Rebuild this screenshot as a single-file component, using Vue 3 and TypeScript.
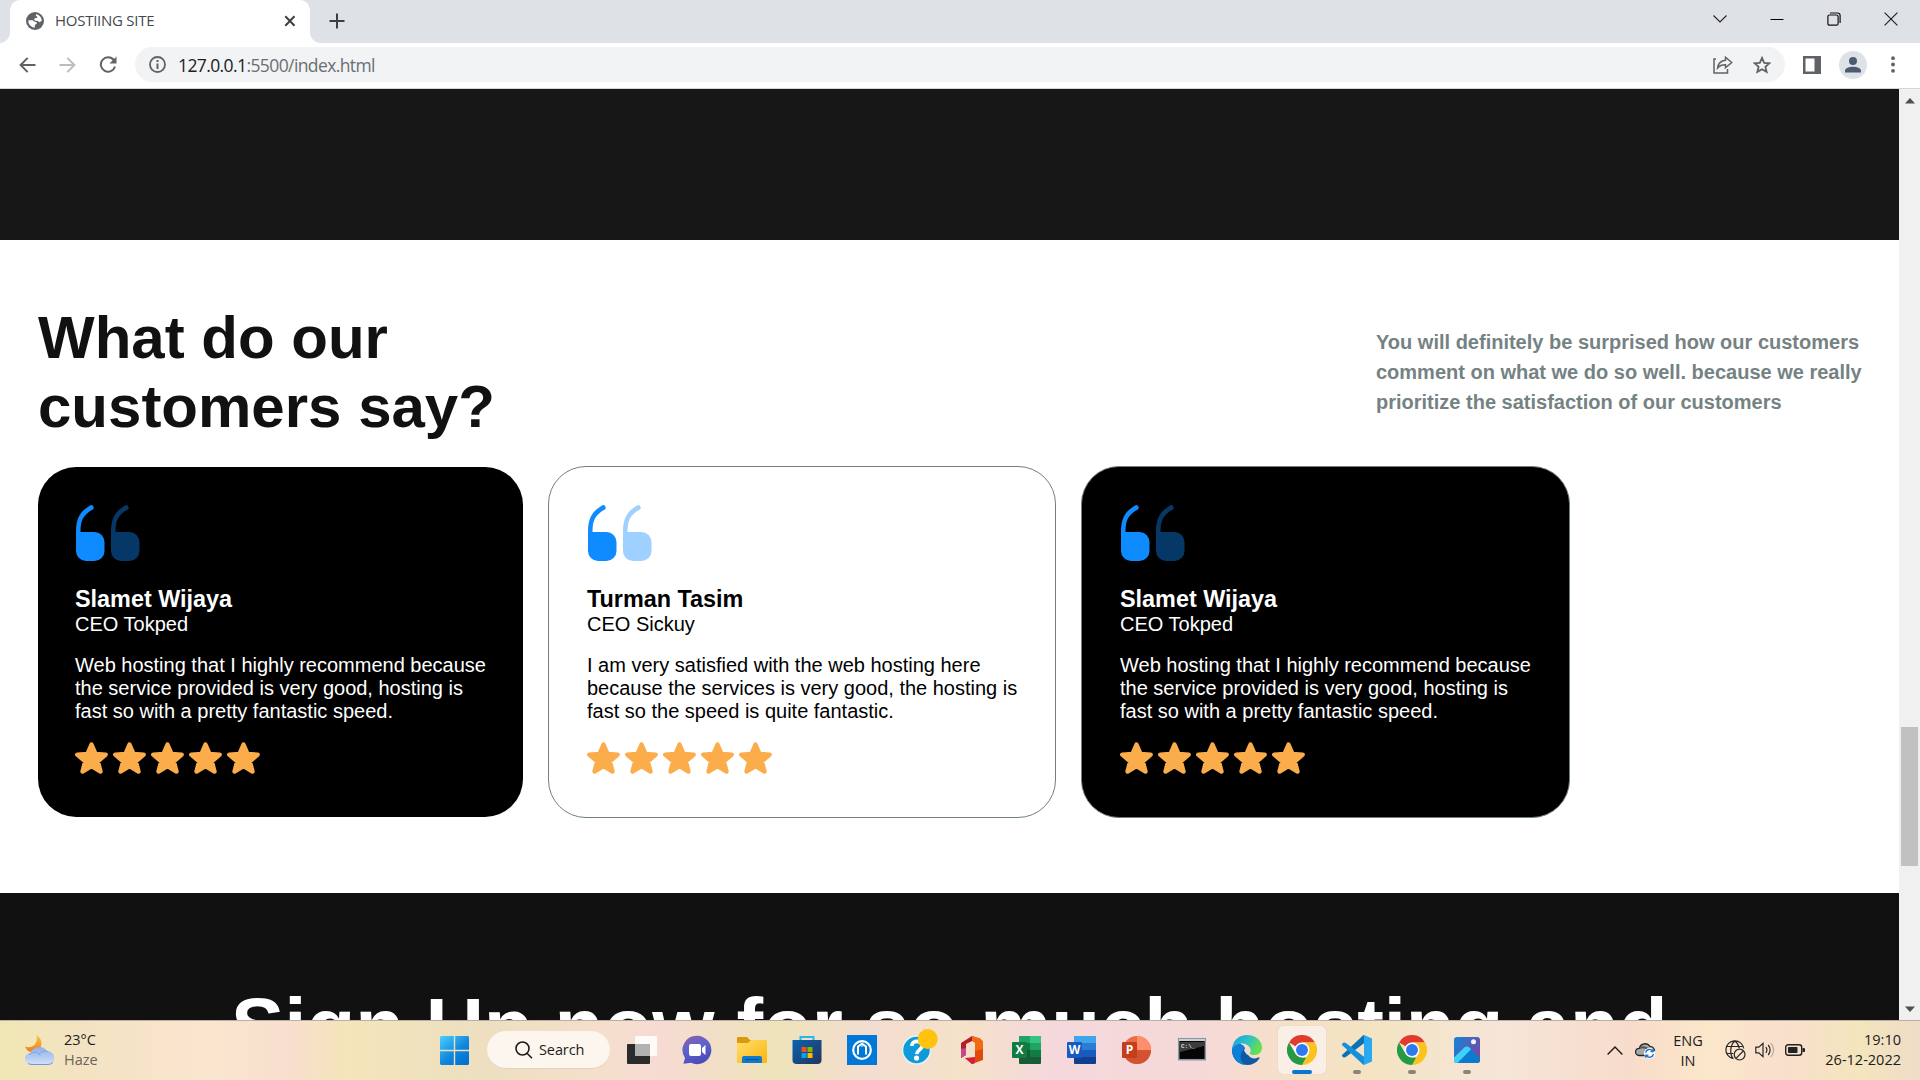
<script setup lang="ts">
interface Review {
  name: string
  role: string
  lines: string[]
  kind: string
}

const slamet = {
  name: 'Slamet Wijaya',
  role: 'CEO Tokped',
  lines: ['Web hosting that I highly recommend because', 'the service provided is very good, hosting is', 'fast so with a pretty fantastic speed.'],
}

const reviews: Review[] = [
  { ...slamet, kind: 'dark first' },
  {
    name: 'Turman Tasim',
    role: 'CEO Sickuy',
    lines: ['I am very satisfied with the web hosting here', 'because the services is very good, the hosting is', 'fast so the speed is quite fantastic.'],
    kind: 'light outlined',
  },
  { ...slamet, kind: 'dark outlined last' },
]

const apps = ['taskview', 'chat', 'folder', 'store', 'vpn', 'help', 'office', 'excel', 'word', 'ppt', 'cmd', 'edge', 'chrome', 'code', 'chrome', 'photos']
const running: Record<number, string> = { 12: 'active', 13: 'open', 14: 'open', 15: 'open' }
const quotePath = 'M0 46V27C0 12 5 6 14 .4a2.500 2.500 0 0 1 2.800 4.100C8.500 9.500 4.600 13 4.500 27H18.500a10 10 0 0 1 10 10v9a10 10 0 0 1-10 10H10A10 10 0 0 1 0 46z'
</script>

<template>
  <div class="screen">
    <div class="tabstrip">
      <div class="tab">
        <svg class="favicon" width="18" height="18" viewBox="0 0 18 18">
          <circle cx="9" cy="9" r="9" fill="#5f6368" />
          <path d="M10.200 2.300c3.200.6 5.500 3.300 5.600 6.500l-2.300 1.500-1.700-1.300-2.800-.2-1-1.800 1.400-.9h1.800V4.600L9.700 4z" fill="#fff" />
          <path d="M2.300 8.200h4.500l1.800 1.600 1.900.3.200 1.700-1.900 1.200v2.700A6.800 6.800 0 0 1 2.300 8.200z" fill="#fff" />
        </svg>
        <span class="tab-title">HOSTIING SITE</span>
        <svg class="tab-close" width="12" height="12" viewBox="0 0 12 12"><path d="M1.300 1.300 10.500 10.700M10.500 1.300 1.300 10.700" stroke="#3c4043" stroke-width="2" /></svg>
      </div>
      <svg class="newtab" width="16" height="16" viewBox="0 0 16 16"><path d="M8 .5v15M.5 8h15" stroke="#3c4043" stroke-width="2" /></svg>
      <div class="winctl">
        <svg width="14" height="14" viewBox="0 0 14 14"><path d="M.5 3.500 7 10l6.500-6.500" fill="none" stroke="#222" stroke-width="1.100" /></svg>
        <svg width="14" height="14" viewBox="0 0 14 14"><path d="M.5 7.500h13" stroke="#000" stroke-width="1" /></svg>
        <svg width="14" height="14" viewBox="0 0 14 14" fill="none" stroke="#111" stroke-width="1.200"><rect x=".9" y="3" width="10.200" height="10.200" rx="1.500" /><path d="M3 1h7.500A2.600 2.600 0 0 1 13.100 3.600V11" /></svg>
        <svg width="14" height="14" viewBox="0 0 14 14"><path d="M.6.6 13.400 13.400M13.400.6.6 13.400" stroke="#222" stroke-width="1.200" /></svg>
      </div>
    </div>

    <div class="toolbar">
      <svg width="17" height="16" viewBox="0 0 17 16" fill="none" stroke="#5f6368" stroke-width="2"><path d="M16.500 8H2M8.700.9 1.600 8l7.100 7.100" /></svg>
      <svg class="fwd" width="17" height="16" viewBox="0 0 17 16" fill="none" stroke="#bbbdc0" stroke-width="2"><path d="M.5 8H15M8.300.9 15.400 8l-7.100 7.100" /></svg>
      <svg class="reload" width="18" height="17" viewBox="0 0 18 17"><path d="M14.800 4.200A7.200 7.200 0 1 0 16 10.500" fill="none" stroke="#5f6368" stroke-width="2" /><path d="M17.500.5v7h-7z" fill="#5f6368" /></svg>
      <div class="omnibox">
        <svg width="17" height="17" viewBox="0 0 17 17"><circle cx="8.500" cy="8.500" r="7.500" fill="none" stroke="#5f6368" stroke-width="1.800" /><path d="M7.500 7.400h2V13h-2zM7.500 4h2v2h-2z" fill="#5f6368" /></svg>
        <span class="url"><b>127.0.0.1</b>:5500/index.html</span>
        <svg class="share" width="20" height="18" viewBox="0 0 20 18" fill="none" stroke="#5f6368" stroke-width="1.500"><path d="M3 3H1v14h13.500v-4" /><path d="M12.500 1.300 18.700 6.500l-6.200 5.200V8.800C9.500 8.700 6.800 9.500 4.600 12 5.100 7.800 7.800 4.700 12.500 4.200z" /></svg>
        <svg class="fav" width="18" height="18" viewBox="0 0 18 18"><path d="m9 1.900 2.200 4.900 5.100.5-3.900 3.500 1.200 5.100L9 13.200l-4.600 2.700 1.200-5.100L1.700 7.300l5.100-.5z" fill="none" stroke="#5f6368" stroke-width="1.800" /></svg>
      </div>
      <svg class="panel" width="18" height="18" viewBox="0 0 18 18"><path d="M0 0h18v18H0zM2.500 2.500v13h9v-13z" fill="#5f6368" fill-rule="evenodd" /></svg>
      <svg class="profile" width="28" height="28" viewBox="0 0 28 28"><circle cx="14" cy="14" r="14" fill="#dee1e6" /><circle cx="14" cy="10" r="4" fill="#4d5b70" /><path d="M6 21.500v-1.700C6 17 10.500 15.700 14 15.700s8 1.300 8 4.100v1.700z" fill="#4d5b70" /></svg>
      <svg class="dots" width="4" height="17" viewBox="0 0 4 17" fill="#5f6368"><circle cx="2" cy="2.200" r="1.900" /><circle cx="2" cy="8.500" r="1.900" /><circle cx="2" cy="14.800" r="1.900" /></svg>
    </div>

    <div class="view">
      <main class="page">
        <section class="band"></section>
        <section class="customers">
          <header class="intro">
            <h2>What do our<br />customers say?</h2>
            <p>You will definitely be surprised how our customers<br />comment on what we do so well. because we really<br />prioritize the satisfaction of our customers</p>
          </header>
          <div class="cards">
            <article v-for="(r, i) in reviews" :key="i" class="card" :class="r.kind">
              <svg class="quote" width="64" height="56" viewBox="0 0 64 56" fill="#0d8bff">
                <path :d="quotePath" />
                <path opacity=".4" transform="translate(35 0)" :d="quotePath" />
              </svg>
              <h3>{{ r.name }}</h3>
              <div class="role">{{ r.role }}</div>
              <p><template v-for="(l, n) in r.lines" :key="n">{{ l }}<br /></template></p>
              <div class="stars">
                <svg v-for="s in 5" :key="s" width="33" height="32" viewBox="0 0 33 32"><path d="M16.500 2.500 20.500 11.900 30.700 12.600 22.900 19.400 25.500 29.500 16.500 24.200 7.500 29.500 10.100 19.400 2.300 12.600 12.500 11.900z" fill="#fbad4c" stroke="#fbad4c" stroke-width="4.400" stroke-linejoin="round" /></svg>
              </div>
            </article>
          </div>
        </section>
        <section class="signup"><h2>Sign Up now for so much hosting and</h2></section>
      </main>
      <div class="scrollbar">
        <svg width="10" height="6" viewBox="0 0 10 6"><path d="M0 5.500 5 0l5 5.500z" fill="#505050" /></svg>
        <div class="thumb"></div>
        <svg width="10" height="6" viewBox="0 0 10 6"><path d="M0 .5 5 6l5-5.500z" fill="#505050" /></svg>
      </div>
    </div>

    <footer class="taskbar">
      <div class="weather">
        <svg width="30" height="30" viewBox="0 0 30 30">
          <defs>
            <linearGradient id="moon" x1="0" y1="0" x2="0" y2="1"><stop offset="0" stop-color="#f9c74c" /><stop offset="1" stop-color="#ef7d14" /></linearGradient>
            <linearGradient id="cloud" x1="0" y1="0" x2="0" y2="1"><stop offset="0" stop-color="#8fb0ea" /><stop offset="1" stop-color="#cfe0fa" /></linearGradient>
          </defs>
          <path d="M11.500 0C18 4 18.500 13 11 16.500 6 18.500 1.500 16 0 11.500c4.500 2 9.500 0 11-4C12 5 12 2.500 11.500 0z" fill="url(#moon)" />
          <path d="M6 29.500a5.700 5.700 0 0 1-.6-11.400A9.400 9.400 0 0 1 22 16.300a6.600 6.600 0 0 1 1.500 13.200z" fill="url(#cloud)" />
          <path d="M4 20c4-4.500 9-3 11 .5M14 19c3-3 7-3.500 9-2.500" fill="none" stroke="#7a9bdb" stroke-width=".8" />
          <path d="M3 28.500q2 1 4 1h16q3 0 5-2" fill="none" stroke="#7295df" />
        </svg>
        <div>23°C<br /><span>Haze</span></div>
      </div>
      <svg class="start" width="29" height="29" viewBox="0 0 29 29">
        <defs><linearGradient id="win" gradientUnits="userSpaceOnUse" x1="0" y1="0" x2="24" y2="29"><stop offset="0" stop-color="#4cd0fd" /><stop offset=".6" stop-color="#0f86dc" /><stop offset="1" stop-color="#0072d0" /></linearGradient></defs>
        <path d="M1 0h12.800v13.800H0V1zM15.200 0H28l1 1v12.800H15.200zM0 15.200h13.800V29H1l-1-1zM15.200 15.200H29V28l-1 1H15.200z" fill="url(#win)" />
      </svg>
      <div class="search">
        <svg width="18" height="18" viewBox="0 0 18 18" fill="none" stroke="#1c1c1c" stroke-width="1.600"><circle cx="7.500" cy="7.500" r="6.500" /><path d="m12 12.300 5 5" /></svg>
        <span>Search</span>
      </div>
      <div class="apps">
        <div v-for="(a, i) in apps" :key="i" class="app" :class="running[i]">
          <svg v-if="a === 'taskview'" width="30" height="30" viewBox="0 0 30 30">
            <rect y="9" width="23" height="20" rx="1" fill="#2b2b2b" /><rect x="8" y="1" width="22" height="20" rx="1" fill="#fff" opacity=".85" /><path d="M8 9h15v12H8z" fill="#a3a3a3" opacity=".75" />
          </svg>
          <svg v-else-if="a === 'chat'" width="30" height="30" viewBox="0 0 30 30">
            <defs><linearGradient id="ch" x1="0" y1="0" x2=".4" y2="1"><stop offset="0" stop-color="#8a62a8" /><stop offset=".5" stop-color="#5f62cc" /><stop offset="1" stop-color="#4d4cb8" /></linearGradient></defs>
            <path d="M15 .8a14.200 14.200 0 1 1-6 27l-7.600 1L3 23A14.200 14.200 0 0 1 15 .8z" fill="url(#ch)" /><rect x="7" y="9" width="12" height="12" rx="2" fill="#fff" /><path d="m20 13 3.500-3v10L20 17z" fill="#fff" />
          </svg>
          <svg v-else-if="a === 'folder'" width="30" height="30" viewBox="0 0 30 30">
            <defs><linearGradient id="fo" x1="0" y1="0" x2="1" y2="1"><stop offset="0" stop-color="#ffdf6d" /><stop offset="1" stop-color="#fbb40c" /></linearGradient></defs>
            <path d="M0 3a1 1 0 0 1 1-1h9l3 3h16v6H0z" fill="#d99a0b" /><path d="M0 8h11l3-3h15a1 1 0 0 1 1 1v21a1 1 0 0 1-1 1H1a1 1 0 0 1-1-1z" fill="url(#fo)" /><path d="M5 28v-5a2 2 0 0 1 2-2h16a2 2 0 0 1 2 2v5z" fill="#0f7acb" /><path d="M8 24.500h14" stroke="#064f8c" />
          </svg>
          <svg v-else-if="a === 'store'" width="30" height="30" viewBox="0 0 30 30">
            <defs><linearGradient id="st" x1="0" y1="0" x2="1" y2="1"><stop offset="0" stop-color="#0b63b0" /><stop offset="1" stop-color="#24335c" /></linearGradient></defs>
            <path d="M8.500 6V2h13v4" fill="none" stroke="#29b5f0" stroke-width="2" /><path d="M.5 5h29v20a4 4 0 0 1-4 4h-21a4 4 0 0 1-4-4z" fill="url(#st)" /><path d="M9.500 12h5v5h-5z" fill="#f25022" /><path d="M15.500 12h5v5h-5z" fill="#7fba00" /><path d="M9.500 18h5v5h-5z" fill="#00a4ef" /><path d="M15.500 18h5v5h-5z" fill="#ffb900" />
          </svg>
          <svg v-else-if="a === 'vpn'" width="30" height="30" viewBox="0 0 30 30">
            <path d="M0 0h30v30H0z" fill="#0078d7" /><circle cx="15" cy="15" r="8.800" fill="none" stroke="#fff" stroke-width="2.200" /><path d="M11 19.500v-8L15 8.700l4 2.800v8" fill="none" stroke="#fff" stroke-width="2" /><path d="M15 9v3" stroke="#fff" stroke-width="1" />
          </svg>
          <svg v-else-if="a === 'help'" class="helpicon" width="36" height="36" viewBox="0 0 36 36">
            <circle cx="14.500" cy="21" r="14" fill="#0f9ad9" stroke="#e8f3f8" stroke-width="1.500" /><path d="M9.800 17c0-6.500 10.500-6 10.200.2-.2 3.800-5 3.700-5.300 8" fill="none" stroke="#fff" stroke-width="3.600" /><circle cx="14.500" cy="29" r="2.600" fill="#fff" /><circle cx="25.700" cy="10" r="10" fill="#ffc20e" />
          </svg>
          <svg v-else-if="a === 'office'" width="30" height="30" viewBox="0 0 30 30">
            <path d="M4 8 15 1v5l-6 3v11l-5 3z" fill="#b41d2d" /><path d="M4 14v9l5-3v-7z" fill="#c44b8b" /><path d="m15 1 8 2.500 3 3V25l-11 4-7-6h10V7.500l-3-1.500z" fill="#e04a0a" /><path d="m15 1 8 2.500 3 3V14l-8 2V7.500L15 6z" fill="#f26a14" /><path d="m8 23 10-1v6l-3 1.200z" fill="#d11f3c" />
          </svg>
          <svg v-else-if="a === 'excel'" width="30" height="30" viewBox="0 0 30 30">
            <rect x="7" y="1" width="22" height="28" rx="1" fill="#185c37" /><path d="M7 2a1 1 0 0 1 1-1h10v7H7z" fill="#21a366" /><path d="M18 1h10a1 1 0 0 1 1 1v6H18z" fill="#33c481" /><path d="M7 8h11v7H7z" fill="#107c41" /><path d="M18 8h11v7H18z" fill="#21a366" /><path d="M18 15h11v7H18z" fill="#107c41" />
            <rect y="7" width="15" height="16" rx="1" fill="#107c41" /><text x="7.500" y="19.300" class="letter">X</text>
          </svg>
          <svg v-else-if="a === 'word'" width="30" height="30" viewBox="0 0 30 30">
            <rect x="7" y="1" width="22" height="28" rx="1" fill="#103f91" /><path d="M7 2a1 1 0 0 1 1-1h20a1 1 0 0 1 1 1v6H7z" fill="#41a5ee" /><path d="M7 8h22v7H7z" fill="#2b7cd3" /><path d="M7 15h22v7H7z" fill="#185abd" />
            <rect y="7" width="15" height="16" rx="1" fill="#185abd" /><text x="7.500" y="19.300" class="letter">W</text>
          </svg>
          <svg v-else-if="a === 'ppt'" width="30" height="30" viewBox="0 0 30 30">
            <circle cx="15" cy="15" r="14" fill="#ed6c47" /><path d="M15 1a14 14 0 0 1 14 14H15z" fill="#ff8f6b" /><path d="M1 15h28a14 14 0 0 1-28 0z" fill="#d35230" />
            <rect y="7" width="15" height="16" rx="1" fill="#c43e1c" /><text x="7.500" y="19.300" class="letter">P</text>
          </svg>
          <svg v-else-if="a === 'cmd'" width="30" height="30" viewBox="0 0 30 30">
            <rect x="1.700" y="3.700" width="26.600" height="21" fill="#050505" stroke="#8c96a0" stroke-width="1.500" /><path d="M2 4h26v2H2z" fill="#c8ced4" /><path d="M3 7h24v4L3 17z" fill="#3c3c3c" /><text x="4" y="12.500" class="prompt">C:\_</text>
          </svg>
          <svg v-else-if="a === 'edge'" width="30" height="30" viewBox="0 0 30 30">
            <defs><linearGradient id="eg" x1="0" y1="0" x2="1" y2=".5"><stop offset="0" stop-color="#1a9de0" /><stop offset=".5" stop-color="#2bc0c8" /><stop offset="1" stop-color="#67e04d" /></linearGradient></defs>
            <path d="M0 15A15 15 0 0 0 15 30c5 0 9-2 12-6 1-1.300.4-2-.8-1.500-5 2.500-10 0-10.700-5L11 10z" fill="#0c59a4" /><path d="M0 15c0 8 5 14 13 15-6-4-6-12 0-17L8 8C3 9 0 11 0 15z" fill="#0d7fd8" /><path d="M0 14C1 5 7 0 15 0c9 0 15 6 15 12.500 0 5-3.500 7.500-8 7.500-3.500 0-5-1-4-2.500C20 14 16.500 8.500 10 8.500 5 8.500 1.500 11 0 14z" fill="url(#eg)" />
            <path d="M12 15.500c.8-3 3-4 4.500-3.500 2 .6 2.700 3.400 1.500 5.500-.8 1.200-.3 2 1 2.300-1.500 1-4 .2-5-1.300-.7-1-.9-1.500-2-3z" fill="#f4dad5" />
          </svg>
          <svg v-else-if="a === 'chrome'" width="30" height="30" viewBox="0 0 30 30">
            <path d="M15 15 2 7.500A15 15 0 0 1 28 7.500H15z" fill="#e23b2e" /><path d="M15 7.500h13A15 15 0 0 1 15 30l6.500-11.200z" fill="#fcc31e" /><path d="M2 7.500l6.500 11.300L15 22.500h4.300L15 30A15 15 0 0 1 2 7.500z" fill="#259a42" /><circle cx="15" cy="15" r="7.500" fill="#fff" /><circle cx="15" cy="15" r="6" fill="#2f78ed" />
          </svg>
          <svg v-else-if="a === 'code'" width="30" height="30" viewBox="0 0 30 30">
            <path d="M22 8.300 3.500 22.200 1.500 22.500 0 21v-1L21 .5 22 0z" fill="#0a72b8" /><path d="M22 21.700 3.500 7.800 1.500 7.500 0 9v1l21 19.500 1 .5z" fill="#1590dc" /><path d="M22 0 30 3.500v23L22 30z" fill="#29a9f2" />
          </svg>
          <svg v-else width="30" height="30" viewBox="0 0 30 30">
            <defs><linearGradient id="ph" gradientUnits="userSpaceOnUse" x1="2" y1="4" x2="28" y2="18"><stop offset="0" stop-color="#1683d8" /><stop offset="1" stop-color="#744aa5" /></linearGradient></defs>
            <rect x="2" y="2" width="26" height="26" rx="3" fill="url(#ph)" />
            <path d="M5 28 14.500 12.500q1.500-1 3 .4L28 23v2a3 3 0 0 1-3 3z" fill="#0b7bd0" />
            <path d="M2 22.500 12.300 12.400q2.500-2 5 0l1.700 1.800L5.500 28H5a3 3 0 0 1-3-3z" fill="#3fd2f8" />
            <circle cx="21.500" cy="6.800" r="2.500" fill="#f1f4ff" />
          </svg>
        </div>
      </div>
      <div class="tray">
        <svg class="chev" width="16" height="9" viewBox="0 0 16 9"><path d="m.6 8.400 7.400-7.400 7.400 7.400" fill="none" stroke="#1c1c1c" stroke-width="1.400" /></svg>
        <svg class="onedrive" width="21" height="18" viewBox="0 0 21 18"><path d="M4 14.500a3.600 3.600 0 0 1 .3-7.200A6 6 0 0 1 15 5.300a4.700 4.700 0 0 1 4.500 4.500L13 14.500z" fill="#a8a8a8" stroke="#252525" stroke-width="1.300" /><path d="M5 7C9 5 12 7 15 9.500" stroke="#555" fill="none" stroke-width="2" /><circle cx="14.500" cy="12.300" r="5.500" fill="#fff" /><path d="M10.600 11.600a4 4 0 0 1 7-1.800M18.400 13a4 4 0 0 1-7 1.800M18.200 7.800v2.700h-2.700M10.800 16.800v-2.700h2.700" fill="none" stroke="#1976c9" stroke-width="1.400" /></svg>
        <div class="lang">ENG<br />IN</div>
        <svg class="globe" width="21" height="21" viewBox="0 0 21 21" fill="none" stroke="#262626" stroke-width="1.200"><path d="M8.500 18.700A9 9 0 1 1 18.800 8.500M1.700 6.500h16.500M1.700 13.500h6.500M8 18.500C4.500 14 5 4.500 10 .9c2.500 1.800 3.700 4.500 4.200 7.200" /><circle cx="14.600" cy="14.600" r="5.400" /><path d="m11 18.300 7.300-7.300" /></svg>
        <svg class="vol" width="20" height="18" viewBox="0 0 20 18" fill="none" stroke="#262626" stroke-width="1.200"><path d="M.8 6.200h3L8 2.300v13.400l-4.200-3.900h-3zM10.800 6.200c1.300 1.600 1.300 4 0 5.600M13.200 4c2.500 2.900 2.500 7.100 0 10" /><path d="M15.700 1.800c3.900 4.200 3.900 10.200 0 14.400" stroke="#bda994" /></svg>
        <svg class="bat" width="20" height="12" viewBox="0 0 20 12"><rect x=".7" y=".7" width="16" height="10.600" rx="2.500" fill="none" stroke="#222" stroke-width="1.400" /><rect x="3" y="3" width="9.500" height="6" rx=".8" fill="#222" /><path d="M17.500 4h1a1.500 1.500 0 0 1 0 4h-1z" fill="#222" /></svg>
        <div class="clock">19:10<br />26-12-2022</div>
      </div>
    </footer>
  </div>
</template>

<style>
body { margin: 0; overflow: hidden; }
</style>

<style scoped>
* { box-sizing: border-box; }
.screen { width: 1920px; height: 1080px; display: flex; flex-direction: column; overflow: hidden; font-family: "Liberation Sans", Arial, sans-serif; background: #fff; }
svg { display: block; flex: none; }
h2, h3, p { margin: 0; }

.tabstrip { height: 43px; flex: none; background: #dee1e6; display: flex; align-items: center; padding-left: 10px; }
.tab { width: 300px; height: 43px; background: #fff; border-radius: 10px 10px 0 0; display: flex; align-items: center; padding: 0 14px 1px 16px; position: relative; font: 15px "Open Sans", "Noto Sans", sans-serif; color: #45494d; }
.tab::before, .tab::after { content: ""; position: absolute; bottom: 0; width: 10px; height: 10px; }
.tab::before { left: -10px; background: radial-gradient(circle at 0 0, transparent 9.500px, #fff 10px); }
.tab::after { right: -10px; background: radial-gradient(circle at 100% 0, transparent 9.500px, #fff 10px); }
.tab-title { margin: -2px 0 0 11px; letter-spacing: -0.27px; white-space: nowrap; flex: 1; }
.newtab { margin: -1px 0 0 19px; }
.winctl { margin-left: auto; display: flex; gap: 43px; padding: 0 22px 6px 0; }

.toolbar { height: 46px; flex: none; display: flex; align-items: center; padding: 0 25px 2px 19px; border-bottom: 1px solid #d5d7da; }
.fwd { margin-left: 23px; }
.reload { margin-left: 23px; }
.omnibox { margin-left: 18px; width: 1650px; height: 35px; border-radius: 18px; background: #f1f3f4; display: flex; align-items: center; padding: 0 14px 0 14px; font: 17.500px "Open Sans", "Noto Sans", sans-serif; }
.url { margin-left: 12px; letter-spacing: -0.600px; color: #6a6e73; white-space: nowrap; }
.url b { font-weight: 400; color: #202124; }
.share { margin-left: auto; }
.fav { margin-left: 20px; }
.panel { margin-left: 18px; }
.profile { margin-left: 18px; }
.dots { margin-left: 24px; }

.view { height: 931px; flex: none; display: flex; }
.page { width: 1899px; height: 931px; overflow: hidden; }
.band { height: 151px; background: #171717; }
.customers { height: 653px; padding: 63px 38px 0; background: #fff; }
.intro { height: 138px; display: flex; justify-content: space-between; align-items: center; }
.intro h2 { font-size: 60px; line-height: 69px; color: #111; }
.intro p { width: 485px; font-size: 20px; line-height: 30px; font-weight: 700; color: #758283; white-space: nowrap; }
.cards { margin-top: 25px; display: flex; align-items: center; gap: 25px; }
.card { height: 350px; width: 485px; border-radius: 38px; padding: 38px 0 0 37px; font-size: 20px; line-height: 23px; white-space: nowrap; }
.dark { background: #000; color: #fff; }
.light { background: #fff; color: #000; }
.outlined { height: 352px; border: 1px solid #717f7f; padding-left: 38px; }
.light.outlined { width: 508px; }
.last { width: 489px; }
.quote { margin-left: 1px; }
.card h3 { margin-top: 25px; font-size: 23.400px; line-height: 26px; }
.role { margin-top: 1px; line-height: 23px; }
.card p { margin-top: 18px; }
.stars { display: flex; gap: 5px; margin-top: 19px; }
.signup { height: 127px; background: #111; overflow: hidden; }
.signup h2 { margin: 88px 0 0 231px; font-size: 80px; line-height: 92px; letter-spacing: -0.1px; color: #fff; white-space: nowrap; }
.scrollbar { width: 21px; background: #f0f0f0; display: flex; flex-direction: column; align-items: center; padding: 9px 0 8px; }
.thumb { width: 17px; height: 139px; margin-top: 623px; margin-bottom: auto; background: #c1c1c1; }

.taskbar { height: 60px; flex: none; display: flex; align-items: center; box-shadow: inset 0 1px #b9afa5; font: 14.500px/20px "Open Sans", "Noto Sans", sans-serif; color: #1c1c1c; background: linear-gradient(90deg, #f1e7b5 0, #f3e3c2 80px, #fae5cf 210px, #f8dfce 290px, #f4e5ba 345px, #eddfc0 480px, #f5dfcb 600px, #f6dbd3 660px, #eee3ba 775px, #f3ddd1 870px, #f5e2c8 960px, #f5d8dc 1050px, #f5d9d8 1200px, #f6e0c8 1290px, #f4e4c2 1370px, #f6e5d8 1500px, #f8dccb 1630px, #fbe7ca 1710px, #f9dfcd 1780px, #f3e5bd 1860px, #efdcc8 1920px); }
.weather { display: flex; align-items: center; gap: 9px; width: 415px; margin: -1px 0 0 25px; letter-spacing: 0; }
.weather span { color: #69645c; }
.start { margin-top: 1px; }
.search { margin-left: 18px; width: 123px; height: 38px; border-radius: 19px; background: #fcf6ee; border-bottom: 1px solid #dfd3c4; display: flex; align-items: center; padding-left: 28px; gap: 6px; letter-spacing: -0.1px; }
.apps { display: flex; margin-left: 4.500px; }
.app { width: 55px; height: 48px; display: flex; align-items: center; justify-content: center; position: relative; }
.active::before { content: ""; position: absolute; left: 3px; top: 0; width: 48px; height: 48px; border-radius: 5px; background: #faefe7; box-shadow: 0 0 1px #cdb9ab; }
.app svg { position: relative; }
.active::after, .open::after { content: ""; position: absolute; bottom: 0; left: 23.500px; width: 8px; height: 4px; border-radius: 2px; background: #8c8379; }
.active::after { left: 17.500px; width: 20px; background: #0877d2; }
.app .helpicon { margin: -6px 0 0 6px; }
.letter { font: 700 12px "Open Sans", sans-serif; fill: #fff; text-anchor: middle; letter-spacing: 0; }
.prompt { font: 700 6px "Liberation Mono", monospace; fill: #ddd; }
.tray { margin-left: auto; margin-right: 19px; display: flex; align-items: center; white-space: nowrap; }
.onedrive { margin-left: 12px; }
.lang { width: 54px; text-align: center; margin: 1px 1px 0 5px; }
.globe { margin-left: 9px; }
.vol { margin-left: 9px; }
.bat { margin-left: 10px; }
.clock { width: 96px; margin-top: -1px; text-align: right; }
</style>
